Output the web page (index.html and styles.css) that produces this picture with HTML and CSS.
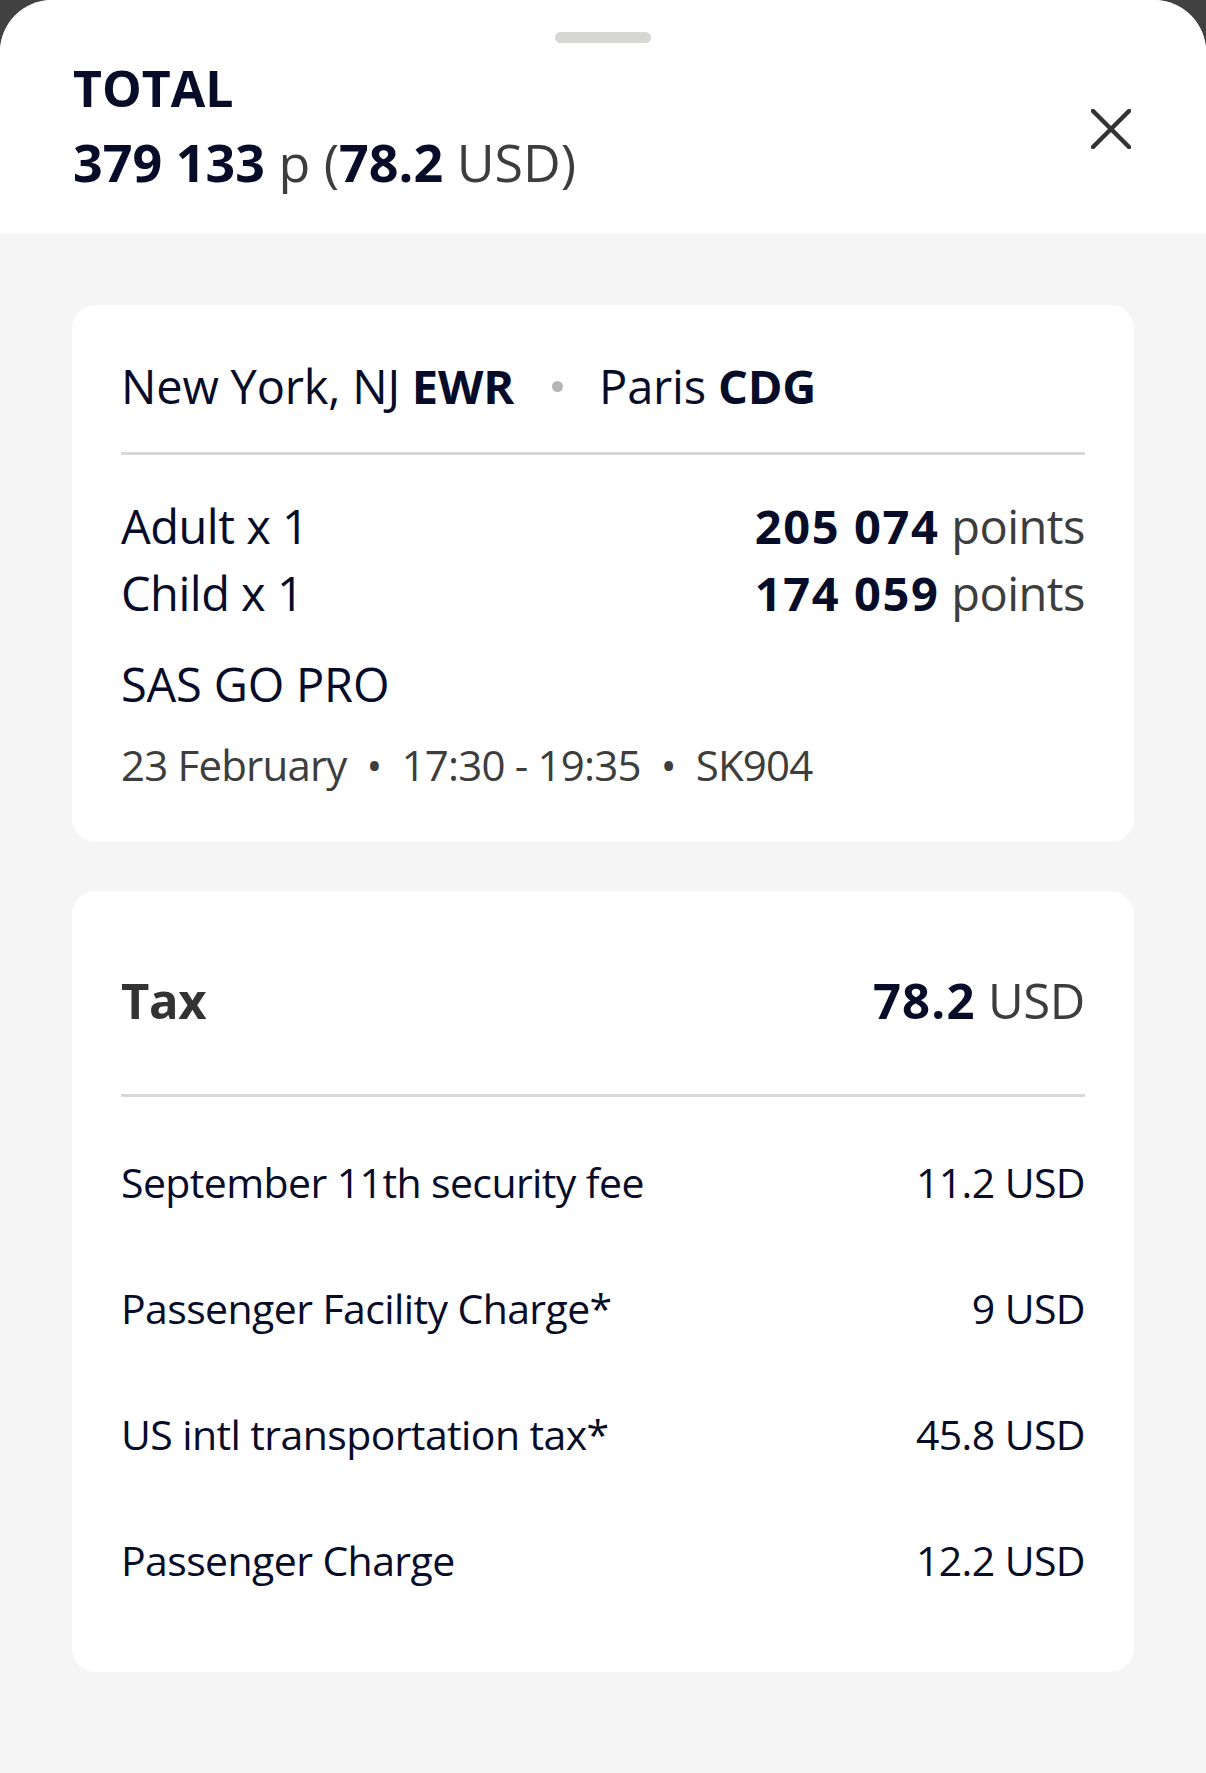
FILE: index.html
```html
<!DOCTYPE html>
<html lang="en">
<head>
<meta charset="utf-8">
<title>Total</title>
<link rel="stylesheet" href="styles.css">
</head>
<body>
<div class="sheet">
  <header class="header">
    <div class="handle"></div>
    <div class="header-row">
      <div class="total">
        <div class="total-label">TOTAL</div>
        <div class="total-amount"><b>379 133</b> <span class="unit">p</span> <span class="unit">(</span><b>78.2</b> <span class="unit">USD)</span></div>
      </div>
      <button class="close" aria-label="Close">
        <svg width="40" height="40" viewBox="0 0 40 40"><path d="M2 2 L38 38 M38 2 L2 38" stroke="#333" stroke-width="4.5" stroke-linecap="round" fill="none"/></svg>
      </button>
    </div>
  </header>
  <main class="content">
    <section class="card flight">
      <div class="route">
        <span>New York, NJ <b>EWR</b></span>
        <span class="route-dot"></span>
        <span>Paris <b>CDG</b></span>
      </div>
      <div class="divider route-divider"></div>
      <div class="pax">
        <div class="pax-row"><span>Adult x 1</span><span><b>205 074</b> <span class="unit">points</span></span></div>
        <div class="pax-row"><span>Child x 1</span><span><b>174 059</b> <span class="unit">points</span></span></div>
      </div>
      <div class="fare">SAS GO PRO</div>
      <div class="meta">23 February<span class="sep">•</span>17:30 - 19:35<span class="sep">•</span>SK904</div>
    </section>
    <section class="card tax">
      <div class="tax-head"><span class="tax-label">Tax</span><span><b>78.2</b> <span class="unit">USD</span></span></div>
      <div class="divider tax-divider"></div>
      <div class="fees">
        <div class="fee-row"><span>September 11th security fee</span><span>11.2 USD</span></div>
        <div class="fee-row"><span>Passenger Facility Charge*</span><span>9 USD</span></div>
        <div class="fee-row"><span>US intl transportation tax*</span><span>45.8 USD</span></div>
        <div class="fee-row"><span>Passenger Charge</span><span>12.2 USD</span></div>
      </div>
    </section>
  </main>
</div>
</body>
</html>
```

FILE: styles.css
```css
* { box-sizing: border-box; }
html, body { margin: 0; padding: 0; }
body {
  background: #414141;
  font-family: "Open Sans", "Noto Sans", sans-serif;
  color: #070c29;
  width: 1206px;
  height: 1773px;
  overflow: hidden;
}
b { font-weight: 700; }
.sheet {
  height: 1773px;
  border-radius: 52px 52px 0 0;
  overflow: hidden;
  background: #f5f5f5;
  display: flex;
  flex-direction: column;
}
.header {
  background: #ffffff;
  height: 233px;
  padding-top: 32px;
}
.handle {
  width: 96px;
  height: 11px;
  margin: 0 auto;
  border-radius: 6px;
  background: #d6d6d3;
}
.header-row {
  display: flex;
  justify-content: space-between;
  align-items: center;
  padding: 0 75px 0 73px;
  margin-top: 15px;
}
.total-label {
  font-size: 50px;
  line-height: 60px;
  font-weight: 700;
}
.total-amount {
  font-size: 52px;
  line-height: 74px;
  margin-top: 7px;
}
.unit { color: #3d3d3d; font-weight: 400; }
.close {
  border: 0;
  background: none;
  padding: 0;
  width: 40px;
  height: 40px;
  display: flex;
}
.content {
  flex: 1;
  padding: 72px 72px 0;
  display: flex;
  flex-direction: column;
  gap: 49px;
}
.card {
  background: #ffffff;
  border-radius: 24px;
  padding: 0 49px;
}
.flight { padding-top: 49px; padding-bottom: 47px; }
.route {
  font-size: 47px;
  line-height: 64px;
  display: flex;
  align-items: center;
  letter-spacing: -0.2px;
}
.route-dot {
  width: 11px;
  height: 11px;
  border-radius: 50%;
  background: #b5b5b5;
  margin: 0 36px 0 38px;
}
.divider { height: 3px; background: #d8d8d8; }
.route-divider { margin-top: 34px; }
.pax { margin-top: 38px; }
.pax-row {
  display: flex;
  justify-content: space-between;
  font-size: 47px;
  line-height: 67px;
  letter-spacing: -0.5px;
}
.pax-row b { letter-spacing: 1.6px; }
.fare {
  font-size: 47px;
  line-height: 64px;
  margin-top: 25px;
  letter-spacing: -0.2px;
}
.meta {
  font-size: 42px;
  line-height: 60px;
  margin-top: 19px;
  color: #3d3d3d;
  letter-spacing: -0.8px;
}
.sep { margin: 0 20px; }
.tax { padding-top: 75px; padding-bottom: 84px; }
.tax-head {
  display: flex;
  justify-content: space-between;
  font-size: 49px;
  line-height: 68px;
  letter-spacing: -0.4px;
}
.tax-head b { letter-spacing: 1.2px; }
.tax-label { font-weight: 700; color: #333333; }
.tax-divider { margin-top: 60px; }
.fees {
  margin-top: 57px;
  display: flex;
  flex-direction: column;
  gap: 70px;
}
.fee-row {
  display: flex;
  justify-content: space-between;
  font-size: 41px;
  line-height: 56px;
  letter-spacing: -0.6px;
}
```
